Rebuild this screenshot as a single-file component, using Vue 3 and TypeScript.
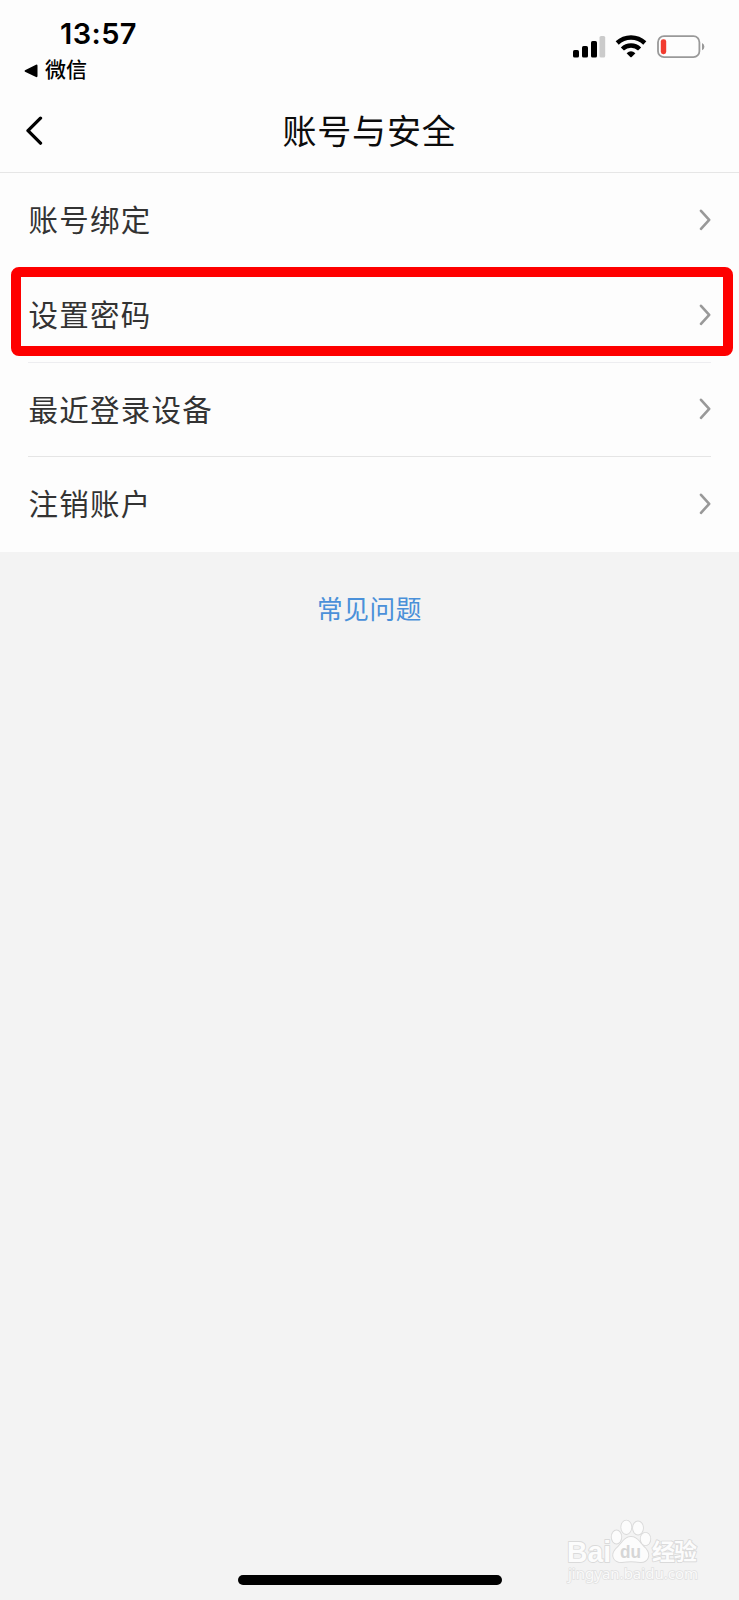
<script setup lang="ts">
interface Row {
  label: string
  highlighted?: boolean
}

const rows: Row[] = [
  { label: '账号绑定' },
  { label: '设置密码', highlighted: true },
  { label: '最近登录设备' },
  { label: '注销账户' },
]
</script>

<template>
  <div class="screen">
    <header class="top">
      <div class="status">
        <div class="status-left">
          <div class="time">13:57</div>
          <div class="back-app">
            <svg width="14" height="14" viewBox="0 0 14 14"><path d="M1 6.2 L12 0.7 Q13.5 0.3 13.5 1.8 V12 Q13.5 13.6 12 13 L1 7.8 Q0 7 1 6.2Z" /></svg>
            <span>微信</span>
          </div>
        </div>
        <div class="status-right">
          <svg class="signal" width="33" height="22" viewBox="0 0 33 22">
            <rect x="0" y="14" width="6" height="7.5" rx="1.6" />
            <rect x="9" y="10" width="6" height="11.5" rx="1.6" />
            <rect x="18" y="5" width="6" height="16.5" rx="1.6" />
            <rect x="26.5" y="0" width="5.7" height="21.5" rx="1.6" fill="#cbcbcb" />
          </svg>
          <svg class="wifi" width="32" height="24" viewBox="0 0 32 24">
            <g fill="none" stroke="#000" stroke-width="4.5">
              <path d="M2.2 9 A20.2 20.2 0 0 1 29.8 9" />
              <path d="M7.4 15 A12.4 12.4 0 0 1 24.6 15" />
            </g>
            <path d="M11.6 19.2 Q16 15.2 20.4 19.2 L16.7 23 Q16 23.6 15.3 23Z" />
          </svg>
          <svg class="battery" width="48" height="24" viewBox="0 0 48 24">
            <rect x="1" y="1.2" width="41.4" height="21" rx="6" fill="none" stroke="#999" stroke-width="1.8" />
            <rect x="3.8" y="4.2" width="5.4" height="15" rx="2.4" fill="#f23b2f" />
            <path d="M45 8 Q47.4 9.2 47.4 11.7 Q47.4 14.2 45 15.2Z" fill="#999" />
          </svg>
        </div>
      </div>
      <nav class="nav">
        <svg class="back" width="18" height="30" viewBox="0 0 18 30"><path d="M14.5 2.2 L2 14.7 L14.5 27.2" fill="none" stroke="#000" stroke-width="3.3" stroke-linecap="round" stroke-linejoin="round" /></svg>
        <h1>账号与安全</h1>
      </nav>
    </header>

    <main class="list">
      <div v-for="row in rows" :key="row.label" class="row" :class="{ highlighted: row.highlighted }">
        <span>{{ row.label }}</span>
        <svg width="12" height="22" viewBox="0 0 12 22"><path d="M2 1.8 L10.2 10.8 L2 19.8" fill="none" stroke="#999" stroke-width="2.6" stroke-linecap="round" stroke-linejoin="round" /></svg>
      </div>
    </main>

    <a class="faq">常见问题</a>

    <footer class="bottom">
      <svg class="watermark" width="140" height="68" viewBox="0 0 140 68">
        <g fill="#fcfcfc" stroke="#dadada" stroke-width="1.8" paint-order="stroke" stroke-linejoin="round">
          <ellipse cx="50.5" cy="20" rx="4.8" ry="6.5" />
          <ellipse cx="60.3" cy="10.3" rx="5" ry="6.7" />
          <ellipse cx="72" cy="11" rx="5" ry="6.5" />
          <ellipse cx="79.5" cy="22" rx="4.8" ry="6.2" />
          <path d="M65 20 C58 20 56 27 50.5 31.5 C44 38 48 45.5 56 45 C62 44 68 44 74 45 C82 45.5 85 38 79.5 31.5 C74 27 72 20 65 20Z" />
          <text class="wm-logo" x="1" y="44.5" textLength="44" lengthAdjust="spacingAndGlyphs">Bai</text>
          <text class="wm-cn" x="86" y="43" textLength="45">经验</text>
        </g>
        <text class="wm-du" x="54" y="41" textLength="21" lengthAdjust="spacingAndGlyphs">du</text>
        <text class="wm-url" x="2" y="62" textLength="130">jingyan.baidu.com</text>
      </svg>
      <div class="home"></div>
    </footer>
  </div>
</template>

<style>
body {
  margin: 0;
}
</style>

<style scoped>
.screen {
  width: 739px;
  height: 1600px;
  display: flex;
  flex-direction: column;
  overflow: hidden;
  background: #f3f3f3;
  font-family: "Liberation Sans", "Noto Sans CJK SC", sans-serif;
}
.top {
  box-sizing: border-box;
  height: 173px;
  background: #fdfdfd;
  border-bottom: 1px solid #e6e6e6;
}
.status {
  height: 90px;
  display: flex;
  justify-content: space-between;
}
.time {
  margin: 16px 0 0 60px;
  height: 36px;
  line-height: 36px;
  font-family: Inter, sans-serif;
  font-size: 29px;
  font-weight: 600;
  letter-spacing: 0.4px;
}
.back-app {
  display: flex;
  align-items: center;
  gap: 7px;
  margin: 5px 0 0 24px;
  height: 28px;
  font-size: 21px;
  font-weight: 500;
}
.back-app span {
  line-height: 28px;
  padding-bottom: 2px;
}
.status-right {
  display: flex;
  align-items: flex-start;
  padding: 35px 34px 0 0;
}
.signal {
  margin-top: 1px;
}
.wifi {
  margin: -1px 10px 0 9px;
}
.battery {
  margin-top: 0;
}
.nav {
  height: 82px;
  display: grid;
  grid-template-columns: 60px 1fr 60px;
  align-items: center;
}
.back {
  margin: 0 0 1px 26px;
}
h1 {
  margin: 0;
  padding-top: 1px;
  text-align: center;
  font-size: 34px;
  font-weight: 400;
  letter-spacing: 0.8px;
  line-height: 50px;
  color: #0c0c0c;
}
.list {
  background: #fdfdfd;
  height: 379px;
  display: grid;
  grid-template-rows: repeat(4, 1fr);
}
.row {
  position: relative;
  margin: 0 28px;
  display: flex;
  align-items: center;
  justify-content: space-between;
  border-bottom: 1px solid #e5e5e5;
  font-size: 29.5px;
  letter-spacing: 1.25px;
  color: #333;
}
.row span {
  padding: 0 0 3.4px 0.5px;
}
.row:first-child,
.row:last-child {
  border-bottom-color: transparent;
}
.highlighted {
  border-bottom-color: #ededf0;
}
.highlighted::after {
  content: "";
  position: absolute;
  box-sizing: border-box;
  left: -17px;
  right: -22px;
  top: -1px;
  height: 89px;
  border: 10px solid #fe0000;
  border-radius: 8px;
}
.faq {
  align-self: center;
  margin-top: 39px;
  line-height: 38px;
  font-size: 25.7px;
  letter-spacing: 0.6px;
  color: #4a90d9;
}
.bottom {
  margin-top: auto;
  display: flex;
  flex-direction: column;
}
.watermark {
  align-self: flex-end;
  margin: 0 33px -10px 0;
}
.home {
  align-self: center;
  width: 264px;
  height: 10px;
  margin-bottom: 15px;
  border-radius: 5px;
  background: #000;
}
.wm-logo {
  font: 700 29px "Liberation Sans", sans-serif;
}
.wm-cn {
  font: 700 23px "Noto Sans CJK SC", sans-serif;
}
.wm-du {
  font: 700 19px "Liberation Sans", sans-serif;
  fill: #d6d6d6;
}
.wm-url {
  font: 15px "Noto Sans", sans-serif;
  fill: #fafafa;
  stroke: #e0e0e0;
  stroke-width: 1.4px;
  paint-order: stroke;
}
</style>
